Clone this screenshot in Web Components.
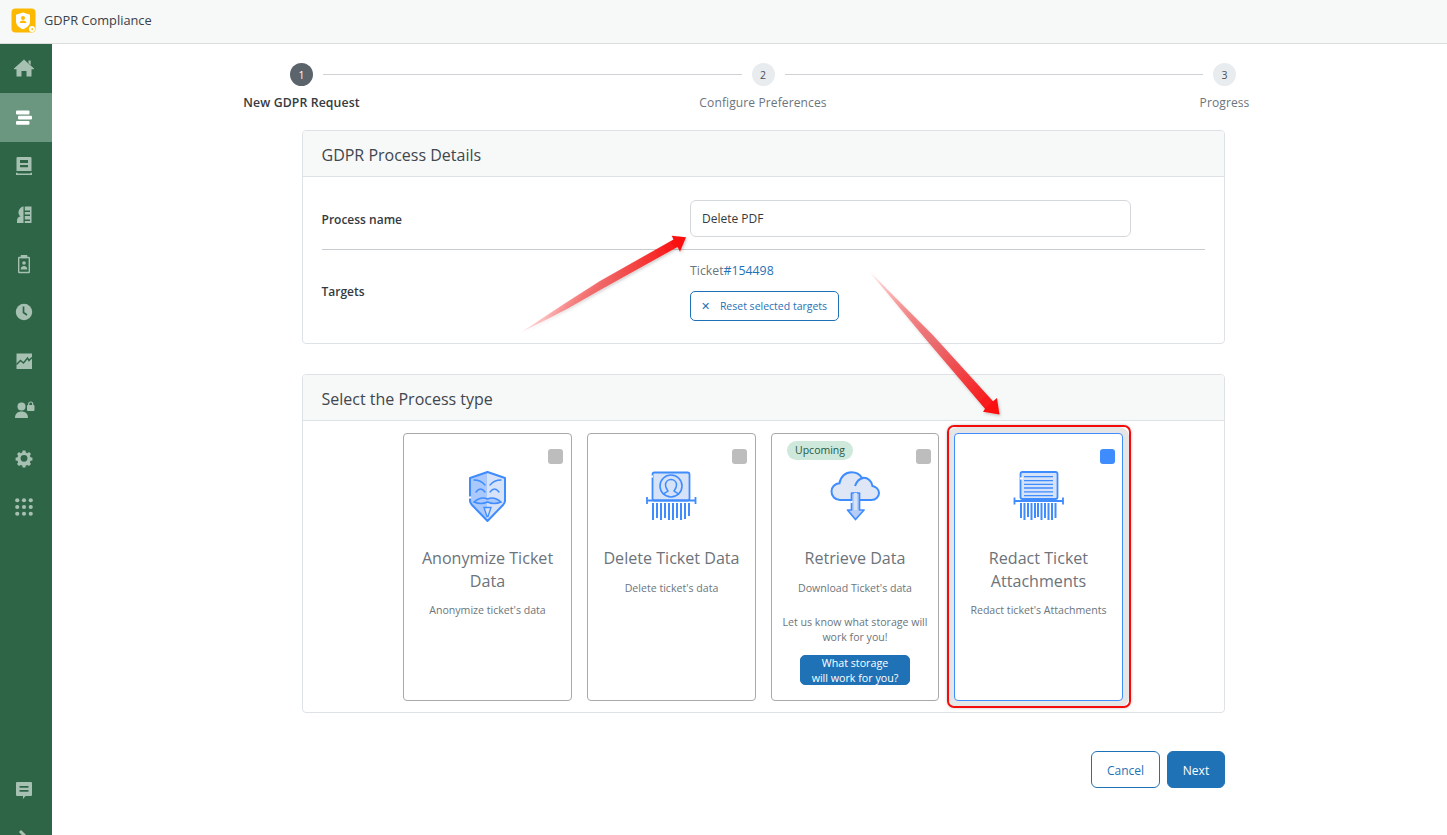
<!DOCTYPE html>
<html lang="en"><head><meta charset="utf-8"><title>GDPR Compliance</title>
<style>
html,body{margin:0;height:100%;overflow:hidden;background:#fff;font-family:"Open Sans",sans-serif;color:#343a40}
#shell{display:flex;height:791px}
#main{flex:1;min-width:0;padding-left:238px;box-sizing:border-box}
#content{margin-left:12px;width:923px;display:flex;flex-direction:column}
</style></head><body>
<template id="t-header"><style>
:host{display:flex;align-items:center;box-sizing:border-box;height:44px;background:#f7f8f8;border-bottom:1px solid #dcdcdc;padding:0 0 2px 11px;gap:8px;font:500 12.800px/1 "Open Sans",sans-serif;color:#3a4148}
svg{display:block;width:25px;height:25px}
</style><svg viewBox="0 0 25 25"><rect x=".5" y=".5" width="24" height="24" rx="4" fill="#fdb900"/><path d="M12 4.500l7 2.200v6.500c0 4-3.200 6.500-7 8-3.800-1.500-7-4-7-8V6.700z" fill="#fff"/><circle cx="12" cy="10" r="2" fill="#fdb900"/><path d="M8.500 15c.5-2 2-2.600 3.500-2.600s3 .6 3.500 2.600z" fill="#fdb900"/><circle cx="21" cy="21" r="3" fill="#fff"/><circle cx="21.200" cy="21.200" r="1" fill="#fdb900"/></svg><slot></slot></template>

<template id="t-nav"><style>
:host{display:block;width:52px;flex:none;background:#2f6547;height:100%}
.wrap{display:flex;flex-direction:column;height:100%;justify-content:space-between}
.top,.bottom{display:flex;flex-direction:column}
.bottom{margin-bottom:-28px}
</style><div class="wrap"><div class="top"><slot></slot></div><div class="bottom"><slot name="bottom"></slot></div></div></template>

<template id="t-nav-item"><style>
:host{display:flex;align-items:center;justify-content:center;box-sizing:border-box;height:48.800px;padding-right:4px;color:#a6c1b2}
:host([active]){background:#6b9680;color:#fff}
::slotted(svg){display:block;width:24px;height:24px}
</style><slot></slot></template>

<template id="t-stepper"><style>
:host{display:flex;align-items:flex-start;width:946px;height:86px;padding-top:19px;box-sizing:border-box}
::slotted(hr){flex:1;border:0;border-top:1px solid #cfd2d4;margin:11px 10px 0}
</style><slot></slot></template>

<template id="t-step"><style>
:host{display:flex;flex-direction:column;align-items:center;width:23px;flex:none}
.n{width:23px;height:23px;border-radius:50%;background:#e9ecef;color:#495057;display:flex;align-items:center;justify-content:center;font-size:10.500px}
:host([current]) .n{background:#5b636b;color:#fff}
.l{white-space:nowrap;font-size:12.050px;line-height:16px;margin-top:9px;color:#6c757d;letter-spacing:.1px}
:host([current]) .l{color:#343a40;font-weight:600;font-size:12.300px}
</style><div class="n"><slot name="n"></slot></div><div class="l"><slot></slot></div></template>

<template id="t-panel"><style>
:host{display:block;border:1px solid #dee2e6;border-radius:4px;box-sizing:border-box}
header{height:46px;box-sizing:border-box;background:#f7f8f8;border-bottom:1px solid #dee2e6;border-radius:3px 3px 0 0;padding:2px 18.500px 0;display:flex;align-items:center;font-size:16px;color:#40474e}
</style><header><slot name="title"></slot></header><slot></slot></template>

<template id="t-row"><style>
:host{display:grid;box-sizing:border-box;grid-template-columns:368.500px 1fr;align-items:center;margin:0 19px 0 18.500px;font-size:12px}
:host([line]){border-bottom:1px solid #c9cccf}
.k{font-weight:600;color:#343a40}
</style><div class="k"><slot name="label"></slot></div><div><slot></slot></div></template>

<template id="t-input"><style>
:host{display:flex;align-items:center;width:441px;height:37px;box-sizing:border-box;border:1px solid #d5d8db;border-radius:6px;padding:0 11px;font-size:12px;color:#343a40}
</style><slot></slot></template>

<template id="t-btn"><style>
:host{display:inline-flex;align-items:center;justify-content:center;box-sizing:border-box;border:1px solid #1f72b6;border-radius:6px;color:#1f72b6;background:#fff;font-size:12px;height:37px;padding-top:1px}
:host([solid]){background:#1f72b6;color:#fff}
:host([small]){font-size:10.500px;height:30px;width:149px;gap:10px;padding:0 1px 0 0;border-radius:5px}
:host([wrap]){border-radius:5px;height:30px;width:110px;font-size:10.700px;line-height:15px;font-weight:500;text-align:center;padding-top:1px}
</style><slot></slot></template>

<template id="t-card"><style>
:host{display:flex;flex-direction:column;align-items:center;position:relative;box-sizing:border-box;width:169px;height:268px;border:1px solid #a9a9a9;border-radius:4px;padding:26px 8px 0;text-align:center;color:#6c757d;background:#fff}
:host([selected]){border-color:#3f8cff;box-shadow:0 0 0 6px #e6e6e6}
:host([selected])::after{content:"";position:absolute;inset:-9px -9px -8px -8px;border:2px solid #f40b0b;border-radius:7px;box-shadow:0 0 3px rgba(0,0,0,.25);pointer-events:none}
.check{position:absolute;top:15px;right:var(--check-right,8px);width:15px;height:15px;border-radius:3px;background:#bdbdbd}
:host([selected]) .check{background:#3f8cff}
.badge{position:absolute;top:7px;left:15px;height:19px;width:66px;border-radius:10px;background:#cfe8dc;color:#1f5b44;font-size:10.500px;line-height:19px}
.badge:empty{display:none}
.icon{height:70px;width:65px;flex:none}
.title{margin-top:17px;font-size:16.100px;line-height:22.500px;font-weight:400;color:#6c737a}
.desc{margin-top:11px;font-size:10.600px;line-height:15px}
::slotted(svg){display:block;width:65px;height:70px}
::slotted(p){margin:19px 0 0;font-size:10.600px;line-height:15px}
::slotted(resketch-btn){margin-top:10.500px}
</style><div class="check"></div><div class="badge" id="b"></div><div class="icon"><slot name="icon"></slot></div><div class="title"><slot name="title"></slot></div><div class="desc"><slot name="desc"></slot></div><slot></slot></template>

<template id="t-annot"><style>
:host{position:fixed;inset:0;display:block;pointer-events:none}
svg{display:block;width:100%;height:100%}
</style><svg viewBox="0 0 1447 835"><defs>
<linearGradient id="a1" gradientUnits="userSpaceOnUse" x1="520" y1="333" x2="686" y2="237"><stop offset="0" stop-color="#ff0000" stop-opacity=".05"/><stop offset=".5" stop-color="#f05050" stop-opacity=".85"/><stop offset="1" stop-color="#fb0606"/></linearGradient>
<linearGradient id="a2" gradientUnits="userSpaceOnUse" x1="868" y1="270" x2="999" y2="414"><stop offset="0" stop-color="#ff0000" stop-opacity=".05"/><stop offset=".5" stop-color="#ea5a5e" stop-opacity=".85"/><stop offset="1" stop-color="#fb0606"/></linearGradient>
<filter id="sh" x="-20%" y="-20%" width="140%" height="140%"><feDropShadow dx="1" dy="1.500" stdDeviation="1.500" flood-color="#000" flood-opacity=".22"/></filter></defs>
<path d="M520 333L567 302L600 281L673.500 239.500L671.700 235.700L686 237.300L680 251.700L677.500 247L602 289L567 309Z" fill="url(#a1)" filter="url(#sh)"/>
<path d="M868 270L933 335.300L993 401.300L997 398L999.500 414.500L983 411.700L985 408.700L927 340.700Z" fill="url(#a2)" filter="url(#sh)"/></svg></template>

<script>
const def=(tag,tpl,init)=>customElements.define(tag,class extends HTMLElement{constructor(){super();this.attachShadow({mode:"open"}).append(document.getElementById(tpl).content.cloneNode(true));}connectedCallback(){init&&init(this)}});
def("resketch-header","t-header");def("side-nav","t-nav");def("nav-item","t-nav-item");def("step-bar","t-stepper");def("step-item","t-step");def("info-panel","t-panel");def("form-row","t-row");def("text-box","t-input");def("resketch-btn","t-btn");def("annot-layer","t-annot");
def("process-card","t-card",e=>{e.shadowRoot.getElementById("b").textContent=e.getAttribute("badge")||""});
</script>

<resketch-header>GDPR Compliance</resketch-header>
<div id="shell">
<side-nav>
<nav-item><svg viewBox="0 0 24 24" fill="currentColor"><path d="M12 3.500L22 12.500q.4.700-.4.800H19.500V20q0 .6-.6.600H14.500V15h-5v5.600H5.100q-.6 0-.6-.6V13.300H2.400q-.8-.1-.4-.8zM16.500 4.500h2.200v4.600l-2.200-2z"/></svg></nav-item>
<nav-item active><svg viewBox="0 0 24 24" fill="currentColor"><rect x="4" y="5.500" width="13.500" height="4" rx="1"/><rect x="6" y="10.700" width="14" height="3.700" rx="1"/><rect x="4" y="16" width="13.500" height="3.700" rx="1"/></svg></nav-item>
<nav-item><svg viewBox="0 0 24 24" fill="currentColor"><path d="M5.500 3h13q1 0 1 1v13h-15V4q0-1 1-1zm2.500 3v3h8V6zm0 5v2.200h8V11z" fill-rule="evenodd"/><path d="M4 18.700h1.500v.8h13v-.8H20V21H4z"/></svg></nav-item>
<nav-item><svg viewBox="0 0 24 24" fill="currentColor"><path d="M11.500 3.500V20H5v-2.500c0-2.500 2-3.800 3.500-4.200-1.500-1-2.200-2.500-2-4.300.3-3 2.800-5.500 5-5.500z"/><path d="M12.800 3.500H19.500V20H12.800v-2H18v-1.500h-5.200V13H18v-1.500h-5.200V9H18V7.500h-5.200z" /></svg></nav-item>
<nav-item><svg viewBox="0 0 24 24" fill="none" stroke="currentColor" stroke-width="1.400"><rect x="6.700" y="5.500" width="10.600" height="15" rx=".6"/><path d="M9.500 5.500V3.700h5v1.800z" fill="currentColor"/><circle cx="12" cy="11" r="1.800" fill="currentColor" stroke="none"/><path d="M8.700 17.500c0-2.500 1.500-3.500 3.300-3.500s3.300 1 3.300 3.500z" fill="currentColor" stroke="none"/></svg></nav-item>
<nav-item><svg viewBox="0 0 24 24"><circle cx="12" cy="12" r="8.200" fill="currentColor"/><path d="M11.500 6.500v6l3.500 2.500" fill="none" stroke="#2f6547" stroke-width="1.700"/></svg></nav-item>
<nav-item><svg viewBox="0 0 24 24"><path d="M4.500 4.500h15.500v15.500H4.500z" fill="currentColor"/><path d="M4.500 15.500l4-4 3 2.500 4-5 1.500 2.500 3-3" fill="none" stroke="#2f6547" stroke-width="1.500"/></svg></nav-item>
<nav-item><svg viewBox="0 0 24 24" fill="currentColor"><circle cx="9.500" cy="8.500" r="4"/><path d="M3 20c0-4.500 3-6.500 6.500-6.500S16 15.500 16 20z"/><rect x="15" y="7" width="7.500" height="6" rx="1"/><path d="M16.700 7.500V6a2 2 0 0 1 4 0v1.500" fill="none" stroke="currentColor" stroke-width="1.200"/></svg></nav-item>
<nav-item><svg viewBox="0 0 24 24" fill="currentColor"><path d="M10.400 3.500h3.200l.5 2.300 1.700.7 2-1.300 2.300 2.300-1.300 2 .7 1.700 2.300.5v3.200l-2.300.5-.7 1.700 1.300 2-2.300 2.300-2-1.300-1.700.7-.5 2.300h-3.200l-.5-2.300-1.700-.7-2 1.300-2.300-2.300 1.300-2-.7-1.700-2.300-.5v-3.200l2.300-.5.7-1.700-1.300-2 2.300-2.300 2 1.300 1.700-.7zM12 8.500a4 4 0 1 0 0 8 4 4 0 0 0 0-8z" fill-rule="evenodd" transform="translate(1.700 .6) scale(.86)"/></svg></nav-item>
<nav-item><svg viewBox="0 0 24 24" fill="currentColor"><g transform="translate(1.200 .7) scale(.9)"><circle cx="4.500" cy="4" r="2.300"/><circle cx="12" cy="4" r="2.300"/><circle cx="19.500" cy="4" r="2.300"/><circle cx="4.500" cy="11.500" r="2.300"/><circle cx="12" cy="11.500" r="2.300"/><circle cx="19.500" cy="11.500" r="2.300"/><circle cx="4.500" cy="19" r="2.300"/><circle cx="12" cy="19" r="2.300"/><circle cx="19.500" cy="19" r="2.300"/></g></svg></nav-item>
<nav-item slot="bottom"><svg viewBox="0 0 24 24" fill="currentColor"><path d="M5 4h14q1 0 1 1v12q0 1-1 1h-5.500L11 21v-3H5q-1 0-1-1V5q0-1 1-1zm2.500 4v1.800h9V8zm0 4v1.800h9V12z" fill-rule="evenodd"/></svg></nav-item>
<nav-item slot="bottom"><svg viewBox="0 0 24 24" fill="none" stroke="currentColor" stroke-width="3"><path d="M8 4l8 8-8 8"/></svg></nav-item>
</side-nav>
<div id="main">
<step-bar>
<step-item current><span slot="n">1</span>New GDPR Request</step-item><hr>
<step-item><span slot="n">2</span>Configure Preferences</step-item><hr>
<step-item><span slot="n">3</span>Progress</step-item>
</step-bar>
<div id="content">
<info-panel style="height:214px">
<span slot="title">GDPR Process Details</span>
<form-row line style="height:73px;padding-top:12px"><span slot="label">Process name</span><text-box style="margin-top:-1px">Delete PDF</text-box></form-row>
<form-row style="height:82px"><span slot="label">Targets</span>
<div style="display:flex;flex-direction:column;align-items:flex-start;gap:11px"><span style="line-height:18px;font-size:12.300px;color:#6c757d">Ticket<span style="color:#1f72b6">#154498</span></span><resketch-btn small><span>✕</span><span>Reset selected targets</span></resketch-btn></div></form-row>
</info-panel>
<info-panel style="height:339px;margin-top:30px">
<span slot="title">Select the Process type</span>
<div style="display:flex;justify-content:center;gap:15px;padding-top:12px;padding-right:1px">
<process-card>
<svg slot="icon" viewBox="0 0 65 70"><path d="M32.500 12L15 18v23q0 2 2 4l15.500 16z" fill="#a9c8fb"/><path d="M32.500 12L50 18v23q0 2-2 4L32.500 61z" fill="#d5e2f8"/><path d="M32.500 12L50 18v23q0 2-2 4L32.500 61 17 45q-2-2-2-4V18z" fill="none" stroke="#3f8cff" stroke-width="2" stroke-linejoin="round"/><path d="M19 20q7 0 11 5M46 20q-7 0-11 5M21 32q4.500-6 9 0M35 32q4.500-6 9 0" fill="none" stroke="#3f8cff" stroke-width="1.300" stroke-linecap="round"/><path d="M19 42q7-6 13.500-3 6.500-3 13.500 3-7 3-13.500 0-6.500 3-13.500 0z" fill="#a9c8fb" stroke="#3f8cff" stroke-width="1.400"/><path d="M29 47.500h7l-3 9h-1z" fill="#d5e2f8" stroke="#3f8cff" stroke-width="1.300"/><path d="M15 36.500v2" stroke="#fff" stroke-width="2.200"/></svg>
<span slot="title">Anonymize Ticket Data</span><span slot="desc">Anonymize ticket's data</span></process-card>
<process-card>
<svg slot="icon" viewBox="4 0 65 70"><rect x="17.500" y="12.500" width="37" height="28" rx="2" fill="#d5e2f8" stroke="#3f8cff" stroke-width="1.800"/><circle cx="36" cy="26" r="11" fill="none" stroke="#3f8cff" stroke-width="1.600"/><path d="M28 34.500c2-2 4-2.500 5-3.500-1-1.500-2.500-3-2.500-6 0-3.500 2.500-5.500 5.500-5.500s5.500 2 5.500 5.500c0 3-1.500 4.500-2.500 6 1 1 3 1.500 5 3.500" fill="none" stroke="#3f8cff" stroke-width="1.500"/><path d="M17 15.500v2" stroke="#fff" stroke-width="2"/><path d="M12 40.500h48.500M12 37v7M60.500 37v7" stroke="#3f8cff" stroke-width="1.800" fill="none"/><path d="M18 43v17M22 43v15M26 43v17M30 43v15M34 43v17M38 43v17M42 43v15M46 43v17M50 43v16M54 43v13" stroke="#3f8cff" stroke-width="2"/></svg>
<span slot="title">Delete Ticket Data</span><span slot="desc">Delete ticket's data</span></process-card>
<process-card badge="Upcoming" style="width:168px;--check-right:7px">
<svg slot="icon" viewBox="2.500 0 65 70"><path d="M19.500 40c-5 0-8.500-3.700-8.500-8.500 0-4.500 3.500-8 8-8.300 1-6.500 6-11 12-11 4.500 0 8.500 2.300 10.500 5.800 6-1 10 3.500 10.500 8 3.500.5 6.500 3.500 6.500 7 0 4-3.500 7-7.500 7z" fill="#dfe6f5" stroke="#3f8cff" stroke-width="2"/><path d="M34.500 26c1.500-4.500 4.500-7.500 8.500-8" fill="none" stroke="#3f8cff" stroke-width="2"/><path d="M31 33v17h-4l8 9.500 8.500-9.500h-4.500V33z" fill="#b7cdf5" stroke="#3f8cff" stroke-width="1.700" stroke-linejoin="round"/><path d="M35 33v17M29 38" stroke="#d5e2f8" stroke-width="3"/><path d="M31 41v2" stroke="#fff" stroke-width="2"/></svg>
<span slot="title">Retrieve Data</span><span slot="desc">Download Ticket's data</span>
<p>Let us know what storage will<br>work for you!</p><resketch-btn solid wrap><span>What storage<br>will work for you?</span></resketch-btn></process-card>
<process-card selected style="--check-right:7px">
<svg slot="icon" viewBox="1 0 65 70"><rect x="15.500" y="12" width="37" height="27" rx="2" fill="#d5e2f8" stroke="#3f8cff" stroke-width="1.800"/><path d="M19 16.700h29M19 20.700h29M19 24.300h29M19 28h29M19 31.800h29M19 35.700h29" stroke="#3f8cff" stroke-width="1.300"/><path d="M15 18.500h3" stroke="#fff" stroke-width="2"/><path d="M9.500 41h48.500M9.500 37.500v7M58 37.500v7" stroke="#3f8cff" stroke-width="1.800" fill="none"/><path d="M16 43v15M19.500 43v17M23 43v14M26.500 43v17M30 43v15M33 43v14M36.500 43v17M40 43v15M43.500 43v17M47 43v17M50.500 43v15" stroke="#3f8cff" stroke-width="2"/></svg>
<span slot="title">Redact Ticket Attachments</span><span slot="desc">Redact ticket's Attachments</span></process-card>
</div>
</info-panel>
<div style="display:flex;justify-content:flex-end;gap:7px;margin-top:38px"><resketch-btn style="width:69px">Cancel</resketch-btn><resketch-btn solid style="width:58px;font-weight:500">Next</resketch-btn></div>
</div>
</div>
</div>
<annot-layer></annot-layer>
</body></html>
